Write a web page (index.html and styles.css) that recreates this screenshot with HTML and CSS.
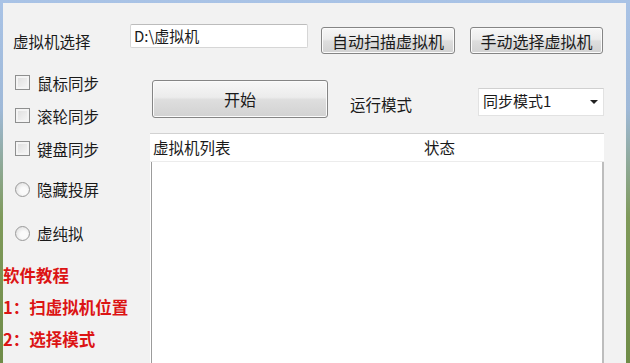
FILE: index.html
```html
<!DOCTYPE html>
<html lang="zh-CN">
<head>
    <meta charset="UTF-8">
    <link rel="stylesheet" href="styles.css">
    <title>虚拟机同步</title>
</head>
<body>
<div class="window">
    <div class="toprow">
        <span class="lbl pick-lbl">虚拟机选择</span>
        <div class="path">D:\虚拟机</div>
        <button class="btn scan">自动扫描虚拟机</button>
        <button class="btn pick">手动选择虚拟机</button>
    </div>

    <div class="main">
        <div class="side">
            <label class="opt check"><span class="box"></span>鼠标同步</label>
            <label class="opt check"><span class="box"></span>滚轮同步</label>
            <label class="opt check"><span class="box"></span>键盘同步</label>
            <label class="opt radio first"><span class="dot"></span>隐藏投屏</label>
            <label class="opt radio"><span class="dot"></span>虚纯拟</label>

            <div class="help">
                <p>软件教程</p>
                <p>1：扫虚拟机位置</p>
                <p>2：选择模式</p>
                <p>3：开始同步</p>
            </div>
        </div>

        <div class="content">
            <div class="controls">
                <button class="btn start">开始</button>
                <span class="lbl mode">运行模式</span>
                <div class="combo">同步模式1<span class="arrow"></span></div>
            </div>

            <div class="list">
                <div class="head">
                    <span class="col1">虚拟机列表</span>
                    <span class="col2">状态</span>
                </div>
                <div class="rows"></div>
            </div>
        </div>
    </div>
</div>
</body>
</html>
```

FILE: styles.css
```css
body {
    margin: 0;
    height: 363px;
    overflow: hidden;
    background: linear-gradient(#a9c3e6 0%, #9fb9d8 30%, #7f9a5a 60%, #6f8c48 100%);
    font-family: "Noto Sans CJK SC", "Noto Sans", sans-serif;
    color: #1a1a1a;
}

.window {
    margin: 3px 4px 0 3px;
    height: 360px;
    background-color: #f2f2f2;
    overflow: hidden;
}

.toprow {
    display: flex;
    align-items: flex-start;
    height: 51px;
    padding-left: 10px;
}

.lbl {
    font-size: 15.5px;
    line-height: 20px;
}

.pick-lbl {
    width: 117px;
    margin-top: 28px;
}

.path {
    box-sizing: border-box;
    width: 178px;
    height: 24px;
    margin-top: 21px;
    padding-left: 3px;
    background: #fff;
    border: 1px solid #d6d6d6;
    border-top-color: #bcbcbc;
    border-radius: 2px;
    font-size: 15px;
    line-height: 21px;
}

button {
    font-family: inherit;
    color: #1a1a1a;
    cursor: pointer;
}

.btn {
    box-sizing: border-box;
    padding: 0;
    border: 1px solid #858585;
    border-radius: 3px;
    background: linear-gradient(#f7f7f7 0%, #ececec 45%, #dedede 52%, #d2d2d2 100%);
    box-shadow: inset 0 0 0 1px #fbfbfb;
    font-size: 16px;
    line-height: 20px;
}

.scan {
    width: 134px;
    height: 27px;
    margin: 24px 0 0 13px;
}

.pick {
    width: 133px;
    height: 27px;
    margin: 24px 0 0 15px;
}

.main {
    display: flex;
}

.side {
    width: 147px;
    padding-top: 12px;
}

.opt {
    display: flex;
    align-items: center;
    height: 33px;
    padding-left: 12px;
    font-size: 15.5px;
}

.radio {
    height: 44px;
}

.radio.first {
    margin-top: 2px;
}

.box {
    box-sizing: border-box;
    width: 15px;
    height: 15px;
    margin-right: 7px;
    border: 1px solid #8e8f8f;
    background: linear-gradient(135deg, #dcdcdc, #f8f8f8);
    box-shadow: inset 0 0 0 2px #f4f4f4;
}

.dot {
    box-sizing: border-box;
    width: 15px;
    height: 15px;
    margin-right: 7px;
    border: 1px solid #9a9a9a;
    border-radius: 50%;
    background: radial-gradient(circle at 60% 60%, #fafafa 30%, #d8d8d8 100%);
}

.help {
    margin-top: 4px;
}

.help p {
    margin: 0;
    color: #dc1414;
    font-weight: bold;
    font-size: 16.5px;
    line-height: 32px;
}

.content {
    flex: 1;
}

.controls {
    display: flex;
    align-items: flex-start;
    height: 79px;
}

.start {
    width: 176px;
    height: 38px;
    margin: 26px 0 0 2px;
}

.mode {
    width: 128px;
    margin: 40px 0 0 22px;
}

.combo {
    position: relative;
    box-sizing: border-box;
    width: 126px;
    height: 28px;
    margin-top: 34px;
    padding-left: 4px;
    background: #fff;
    border: 1px solid #e2e2e2;
    border-top-color: #d0d0d0;
    font-size: 15px;
    line-height: 24px;
}

.arrow {
    position: absolute;
    right: 5px;
    top: 11px;
    width: 0;
    height: 0;
    border-left: 4px solid transparent;
    border-right: 4px solid transparent;
    border-top: 4px solid #222;
}

.list {
    width: 454px;
    height: 240px;
    background: #fff;
    border-top: 1px solid #d2d2d2;
}

.head {
    display: flex;
    height: 27px;
    border-bottom: 1px solid #ececec;
    font-size: 15.5px;
    line-height: 26px;
}

.col1 {
    width: 271px;
    padding-left: 3px;
}

.rows {
    height: 220px;
    border-left: 1px solid #9c9c9c;
    border-right: 2px solid #bdbdbd;
    margin-left: 1px;
}
```
